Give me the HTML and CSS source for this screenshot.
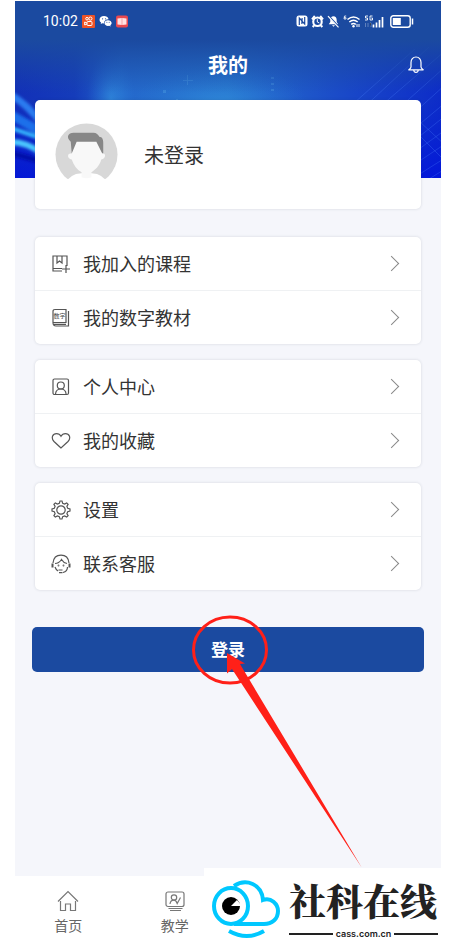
FILE: index.html
```html
<!DOCTYPE html>
<html lang="zh-CN">
<head>
<meta charset="utf-8">
<meta name="viewport" content="width=device-width, initial-scale=1">
<title>我的</title>
<link rel="stylesheet" href="styles.css">
</head>
<body>
<div class="screen">
  <header class="hero">
    <svg class="hero-art" viewBox="0 0 426 177" preserveAspectRatio="none" aria-hidden="true">
      <defs>
        <linearGradient id="base" x1="0" x2="1" y1="0" y2="0">
          <stop offset="0" stop-color="#1230b8"/><stop offset=".14" stop-color="#153cba"/><stop offset=".25" stop-color="#2468cc"/><stop offset=".5" stop-color="#2672cc"/><stop offset=".75" stop-color="#1b4cc8"/><stop offset="1" stop-color="#0d2cc8"/>
        </linearGradient>
        <linearGradient id="fade" x1="0" x2="0" y1="0" y2="1">
          <stop offset="0" stop-color="#1b4aa0"/><stop offset=".22" stop-color="#1b4aa0"/><stop offset=".52" stop-color="#1b4aa0" stop-opacity="0"/>
        </linearGradient>
        <linearGradient id="deep" x1="0" x2="0" y1="0" y2="1">
          <stop offset=".56" stop-color="#0018d8" stop-opacity="0"/><stop offset="1" stop-color="#0010e0" stop-opacity=".75"/>
        </linearGradient>
        <radialGradient id="glow"><stop offset="0" stop-color="#3aa6e8" stop-opacity=".8"/><stop offset="1" stop-color="#2a80dc" stop-opacity="0"/></radialGradient>
        <filter id="soft"><feGaussianBlur stdDeviation="1.5"/></filter>
      </defs>
      <rect width="426" height="177" fill="url(#base)"/>
      <ellipse cx="205" cy="108" rx="90" ry="46" fill="url(#glow)" opacity=".6"/>
      <ellipse cx="96" cy="98" rx="24" ry="48" fill="url(#glow)" opacity=".6"/>
      <rect width="426" height="177" fill="url(#deep)"/>
      <g filter="url(#soft)" fill="none">
        <path d="M-4 94Q12 103 28 124" stroke="#2b7cf0" stroke-width="7"/>
        <path d="M-4 114L28 132" stroke="#1c70ea" stroke-width="9"/>
        <path d="M-4 127L28 138" stroke="#35b6ff" stroke-width="4"/>
        <path d="M-4 141Q12 141 28 153" stroke="#4cc8ff" stroke-width="6"/>
        <path d="M-4 152L28 161" stroke="#0010a8" stroke-width="5"/>
      </g>
      <g stroke="#4f86ff" stroke-opacity=".28" fill="none">
        <path d="M330 110L400 48M345 110L414 46M360 110L430 50M375 115L430 66M390 120L430 84M400 127L430 102M400 139L430 115M400 151L430 129M400 163L430 143M400 176L430 157M414 178L430 168M404 120L430 144M404 134L430 160"/>
      </g>
      <g fill="#6ac0f0" opacity=".25"><path d="M148 89h3v3h-3zM168 79h10v1h-10zM172 74h1v10h-1zM256 76h3v2h-3zM256 82h3v2h-3zM256 88h3v2h-3zM161 98h2v6h-2z"/></g>
      <rect width="426" height="177" fill="url(#fade)"/>
    </svg>
    <div class="status">
      <div class="status-left">
        <span>10:02</span>
        <svg width="13" height="13" viewBox="0 0 13 13" aria-hidden="true"><rect width="13" height="13" rx="1" fill="#ee5326"/><g fill="none" stroke="#fff"><circle cx="5" cy="3.7" r="1.3"/><circle cx="8.4" cy="3.6" r="1.6"/><rect x="5" y="6.5" width="5" height="4" rx="1"/><path d="M5 8L2.700 7v3L5 9"/></g></svg>
        <svg width="13" height="13" viewBox="0 0 13 13" aria-hidden="true"><path d="M5 1C2.300 1 .5 2.600.5 4.700c0 1.200.7 2.200 1.600 2.900L1.700 9l1.700-.8 1.500.2c0-2.600 2-4.300 4.700-4.200C9.100 2.200 7.300 1 5 1z" fill="#fff"/><path d="M9 5.200c-2 0-3.500 1.300-3.500 2.900S7 11 9 11l1.200-.2 1.500.8-.4-1.300c.8-.5 1.300-1.300 1.300-2.200C12.600 6.500 11 5.200 9 5.200z" fill="#fff"/><g fill="#1b4aa0"><circle cx="3.600" cy="3.800" r=".6"/><circle cx="6.500" cy="3.800" r=".6"/><circle cx="7.900" cy="7.300" r=".5"/><circle cx="10.200" cy="7.300" r=".5"/></g></svg>
        <svg width="12" height="13" viewBox="0 0 12 13" aria-hidden="true"><rect y=".5" width="12" height="12" rx="2" fill="#e9494f"/><path d="M1.500 3.500L5.800 3v7l-4.300-.4zM6.200 3l4.300.5v6.100l-4.300.4z" fill="#ffe3e4"/></svg>
      </div>
      <div class="status-right">
        <svg width="12" height="12" viewBox="0 0 12 12" aria-hidden="true"><rect x=".5" y=".5" width="11" height="11" rx="2.500" fill="#fff"/><path d="M3.300 10V3l2.800 3M8.700 2v7L5.900 6v3M6.100 3v3" fill="none" stroke="#1b4aa0" stroke-width="1.200"/></svg>
        <svg width="13" height="13" viewBox="0 0 13 13" aria-hidden="true"><circle cx="6.500" cy="6.700" r="5.300" fill="#fff"/><path d="M1 4.300L3.800 1M12 4.300L9.200 1M3 10.500L1.700 12M10 10.500l1.300 1.500" stroke="#fff" stroke-width="2"/><circle cx="6.500" cy="6.700" r="3.200" fill="#1b4aa0"/><path d="M6.300 4.200V7l2 1" stroke="#fff" fill="none"/></svg>
        <svg width="13" height="13" viewBox="0 0 13 13" aria-hidden="true"><path d="M6.500 1.200C4.500 1.200 3.300 2.700 3.300 5v2L1.800 9.300h9.400L9.700 7V5c0-2.300-1.200-3.800-3.200-3.800zM5 10.200h3l-1.500 1.500z" fill="#fff"/><path d="M1.800 1L12 12" stroke="#1b4aa0" stroke-width="1.600"/><path d="M1 1.200L11.500 12.300" stroke="#fff" stroke-width="1.200"/></svg>
        <svg width="18" height="13" viewBox="0 0 18 13" aria-hidden="true"><path d="M3.200 1H1.500L1 4h2V2.700H1" fill="none" stroke="#fff" stroke-width=".8"/><g fill="none" stroke="#fff" stroke-width="1.500"><path d="M4.500 4.500Q10.500-.4 16.500 4.500M6.300 7Q10.500 3.600 14.700 7M8.200 9.300q2.300-1.800 4.600 0"/></g><circle cx="10.500" cy="11.300" r="1.200" fill="#fff"/><path d="M14 9v3M16 9v3" stroke="#fff"/></svg>
        <svg width="20" height="13" viewBox="0 0 20 13" aria-hidden="true"><path d="M4 1H1.500v2H3.500V5H1M8.500 1H6v4h2.500V3H7.300" stroke="#fff" fill="none" stroke-width=".9"/><path d="M1.500 8v4M4 8v4M6 8h1v4" stroke="#fff" stroke-opacity=".3"/><path d="M9.500 12.500v-3M12.500 12.500V7.500M15.500 12.500V5M18.500 12.500V2" stroke="#fff" stroke-width="1.700"/></svg>
        <svg class="battery" width="24" height="13" viewBox="0 0 24 13" aria-hidden="true"><rect x=".8" y=".8" width="19.400" height="11.400" rx="2.500" fill="none" stroke="#fff" stroke-width="1.400"/><path d="M2.800 3h8v7h-8z" fill="#fff"/><path d="M22.500 3.500v6" stroke="#fff" stroke-width="1.500"/></svg>
      </div>
    </div>
    <div class="titlebar">
      <h1>我的</h1>
      <button class="bell" type="button" aria-label="通知">
        <svg width="18" height="20" viewBox="0 0 18 20" aria-hidden="true"><path d="M9 2C5.900 2 4 4.400 4 7.500V12c0 1.200-.8 1.800-2.200 2.800h14.400C14.800 13.800 14 13.200 14 12V7.500C14 4.400 12.100 2 9 2zM6.700 15c.2 1.700 1 2.400 2.300 2.400s2.100-.7 2.300-2.400" fill="none" stroke="#fff" stroke-width="1.200" stroke-linejoin="round"/></svg>
      </button>
    </div>
  </header>

  <main>
    <a class="card profile" href="#login">
      <svg width="63" height="63" viewBox="0 0 64 64" aria-hidden="true">
        <circle cx="32" cy="32" r="31.500" fill="#d8d8d8"/>
        <path d="M8 64Q15 51 27 51h10Q49 51 56 64z" fill="#fff"/>
        <path d="M0 57h64v7H0z" fill="#fff"/>
        <path d="M17 31l-1-12c-5-4-3-9 3-9h20c3 0 5 2 6 4 3 0 4 3 4 6v11z" fill="#878787"/>
        <path d="M22 19h20l6 12c4-1 4 5-1 6-2 7-6 10-10 13v5q-5 2-10 0v-5c-5-3-8-7-10-13-5-1-5-7 0-6z" fill="#f8f8f8"/>
      </svg>
      <span>未登录</span>
    </a>

    <nav class="card menu" aria-label="学习">
      <a href="#courses">
        <svg viewBox="0 0 20 20" aria-hidden="true"><path d="M11 17H2V2h14v10M2 14.500h9M6 2v7l2.500-2L11 9V2M15 11v8M11 15h8"/></svg>
        <span>我加入的课程</span><i class="chevron"></i>
      </a>
      <a href="#books">
        <svg viewBox="0 0 20 20" aria-hidden="true"><path d="M4 1.500h11v13H2V3.500q0-2 2-2zM2 14.500q0 3.500 3 3.500h12.500V3M3 16.300h12"/><text x="2.500" y="9.500">数字</text></svg>
        <span>我的数字教材</span><i class="chevron"></i>
      </a>
    </nav>

    <nav class="card menu" aria-label="个人">
      <a href="#me">
        <svg viewBox="0 0 20 20" aria-hidden="true"><rect x="2" y="2" width="15.500" height="15.500" rx="1.500"/><circle cx="9.800" cy="8.500" r="3.500"/><path d="M4.500 17c.3-3 2.200-5 5.300-5s5 2 5.300 5"/></svg>
        <span>个人中心</span><i class="chevron"></i>
      </a>
      <a href="#favorites">
        <svg viewBox="0 0 20 20" aria-hidden="true"><path d="M10 17L3 10.500C-.5 6.500 2 2.700 5.500 2.700c2 0 3.500.8 4.500 2.600 1-1.800 2.500-2.600 4.500-2.600C18 2.700 20.500 6.500 17 10.500z"/></svg>
        <span>我的收藏</span><i class="chevron"></i>
      </a>
    </nav>

    <nav class="card menu" aria-label="服务">
      <a href="#settings">
        <svg viewBox="0 0 20 20" aria-hidden="true"><circle cx="10" cy="10" r="4.200"/><path d="M8.300 3.300L9 1h2l.7 2.300 1.900.8 2.100-1.200 1.400 1.400-1.200 2.100.8 1.900L19 9v2l-2.300.7-.8 1.900 1.200 2.100-1.400 1.400-2.100-1.200-1.900.8L11 19H9l-.7-2.300-1.900-.8-2.100 1.200-1.400-1.400 1.200-2.100-.8-1.900L1 11V9l2.300-.7.8-1.900-1.200-2.100 1.400-1.400 2.100 1.200z"/></svg>
        <span>设置</span><i class="chevron"></i>
      </a>
      <a href="#support">
        <svg viewBox="0 0 20 20" aria-hidden="true"><path d="M2 9C2.500 4 5.500 1.200 10 1.200S17.500 4 18 9M4 9.500c2.500 0 5-1.700 6.500-4 1.300 2.300 3 3.500 5.500 4M4 13c.5 1.500 1.500 3 3 4M16.500 13c0 3-2 5-4.500 5.500M7.500 16h4M8 18.700h3.500"/><path d="M1.500 9.500v4M18.500 9.500v4" stroke-width="2"/><circle cx="7.500" cy="11.500" r=".3"/><circle cx="12.500" cy="11.500" r=".3"/></svg>
        <span>联系客服</span><i class="chevron"></i>
      </a>
    </nav>

    <button class="login" type="button">登录</button>
  </main>

  <nav class="tabs" aria-label="主导航">
    <a href="#home">
      <svg width="22" height="22" viewBox="0 0 22 22" aria-hidden="true"><path d="M1 11.500L11 1.500l10 10M3.500 11v9.500H8.500V14h5v6.500h5V11"/></svg>
      <span>首页</span>
    </a>
    <a href="#teach">
      <svg width="22" height="22" viewBox="0 0 22 22" aria-hidden="true"><rect x="2" y="2" width="18" height="14.500" rx="2"/><circle cx="10" cy="7.500" r="2.700"/><path d="M6 14c.3-2.500 1.700-3.800 4-3.800 1.500 0 2.300.8 3.200 3.300L16.500 7.500M4.500 18.500h14M6 20.500h11"/></svg>
      <span>教学</span>
    </a>
  </nav>

  <svg class="pointer" width="180" height="258" viewBox="0 0 180 258" aria-hidden="true">
    <ellipse cx="40" cy="40" rx="36.500" ry="33" fill="none" stroke="#ff2018" stroke-width="3"/>
    <path d="M37 43l18 10.500-5 .5L172 258 42 59l-5 4.500z" fill="#ff2018"/>
  </svg>

  <aside class="brand">
    <svg width="70" height="62" viewBox="0 0 70 62" aria-hidden="true">
      <g fill="none" stroke="#00c8ff" stroke-width="4">
        <path d="M22 7C34-1 50 5 51 21C59 18 66 25 66 32c0 8-6 13-14 13H22"/>
        <ellipse cx="19" cy="27" rx="17" ry="18"/>
        <path d="M17 52q18 10 35 0"/>
      </g>
      <circle cx="19" cy="27" r="9" fill="#000"/><path d="M19 27l6-6 5 6z" fill="#fff"/>
    </svg>
    <div class="brand-text"><strong>社科在线</strong><span>cass.com.cn</span></div>
  </aside>
</div>
</body>
</html>
```
FILE: styles.css
```css
* {
  box-sizing: border-box;
}

body {
  margin: 0;
  background: #fff;
  color: #333;
  font-family: "Noto Sans CJK SC", sans-serif;
}

a {
  color: inherit;
  text-decoration: none;
}

button {
  font: inherit;
  border: 0;
  padding: 0;
  cursor: pointer;
}

svg {
  display: block;
  flex: none;
}

.screen {
  position: relative;
  display: flex;
  flex-direction: column;
  min-height: 100vh;
  padding: 1px 15px 0;
}

.hero {
  position: relative;
  height: 99px;
  color: #fff;
}

.hero-art {
  position: absolute;
  top: 0;
  left: 0;
  width: 100%;
  height: 177px;
}

.status {
  position: relative;
  display: flex;
  justify-content: space-between;
  align-items: center;
  height: 40px;
  padding: 0 27px 0 28px;
  font: 14px/20px Roboto, sans-serif;
}

.status-left,
.status-right {
  display: flex;
  align-items: center;
  gap: 4px;
}

.status-right {
  gap: 3px;
}

.battery {
  margin-left: 3px;
}

.titlebar {
  position: relative;
  display: grid;
  grid-template-columns: 1fr auto 1fr;
  align-items: center;
  height: 48px;
  padding: 0 16px;
}

h1 {
  grid-column: 2;
  margin: 0;
  font-size: 20px;
  line-height: 28px;
  font-weight: 700;
}

.bell {
  justify-self: end;
  background: none;
}

main {
  flex: 1;
  display: flex;
  flex-direction: column;
  gap: 16px;
  padding: 0 20px;
  background: #f5f6fb;
}

.card {
  position: relative;
  border-radius: 5px;
  background: #fff;
  box-shadow: 0 0 3px rgba(40, 50, 70, 0.16);
}

.profile {
  display: flex;
  align-items: center;
  gap: 26px;
  height: 109px;
  margin-bottom: 12px;
  padding: 0 20px;
  font-size: 20px;
  line-height: 28px;
}

.menu a {
  display: flex;
  align-items: center;
  gap: 12px;
  height: 53px;
  padding: 0 20px 0 16px;
  font-size: 18px;
  line-height: 26px;
}

.menu span {
  padding-bottom: 2px;
}

.menu a + a {
  height: 54px;
  border-top: 1px solid #eff1f3;
}

.menu svg {
  width: 20px;
  height: 20px;
  fill: none;
  stroke: #555;
  stroke-width: 1.2;
}

.menu text {
  fill: #444;
  stroke: none;
  font-size: 6px;
}

.chevron {
  width: 11px;
  height: 11px;
  margin: 0 4px 0 auto;
  border: solid #888;
  border-width: 1px 1px 0 0;
  transform: rotate(45deg);
}

.login {
  height: 45px;
  margin: 21px -3px 0;
  padding-bottom: 2px;
  border-radius: 5px;
  background: #1b4aa0;
  color: #fff;
  font-size: 17px;
  font-weight: 700;
}

.tabs {
  display: grid;
  grid-template-columns: repeat(4, 1fr);
  height: 72px;
  padding-top: 14px;
  background: #fff;
  color: #666;
  font-size: 14px;
  line-height: 20px;
}

.tabs a {
  display: flex;
  flex-direction: column;
  align-items: center;
  gap: 3px;
}

.tabs svg {
  fill: none;
  stroke: #777;
  stroke-width: 1.2;
}

.pointer {
  position: absolute;
  top: 610px;
  left: calc(50% - 38px);
}

.brand {
  position: absolute;
  right: 0;
  bottom: 0;
  display: flex;
  align-items: center;
  gap: 7px;
  width: 252px;
  height: 80px;
  padding: 4px 18px 0 8px;
  background: #fff;
  color: #222;
}

.brand-text {
  flex: 1;
}

.brand-text strong {
  display: block;
  padding-bottom: 8px;
  font-family: "Noto Serif CJK SC", "Noto Sans CJK SC", serif;
  font-size: 37px;
  line-height: 40px;
  font-weight: 900;
  white-space: nowrap;
}

.brand-text span {
  display: flex;
  align-items: center;
  gap: 3px;
  font: 600 9px/12px Inter, sans-serif;
}

.brand-text span::before,
.brand-text span::after {
  content: "";
  flex: 1;
  height: 2px;
  background: #222;
}
```
